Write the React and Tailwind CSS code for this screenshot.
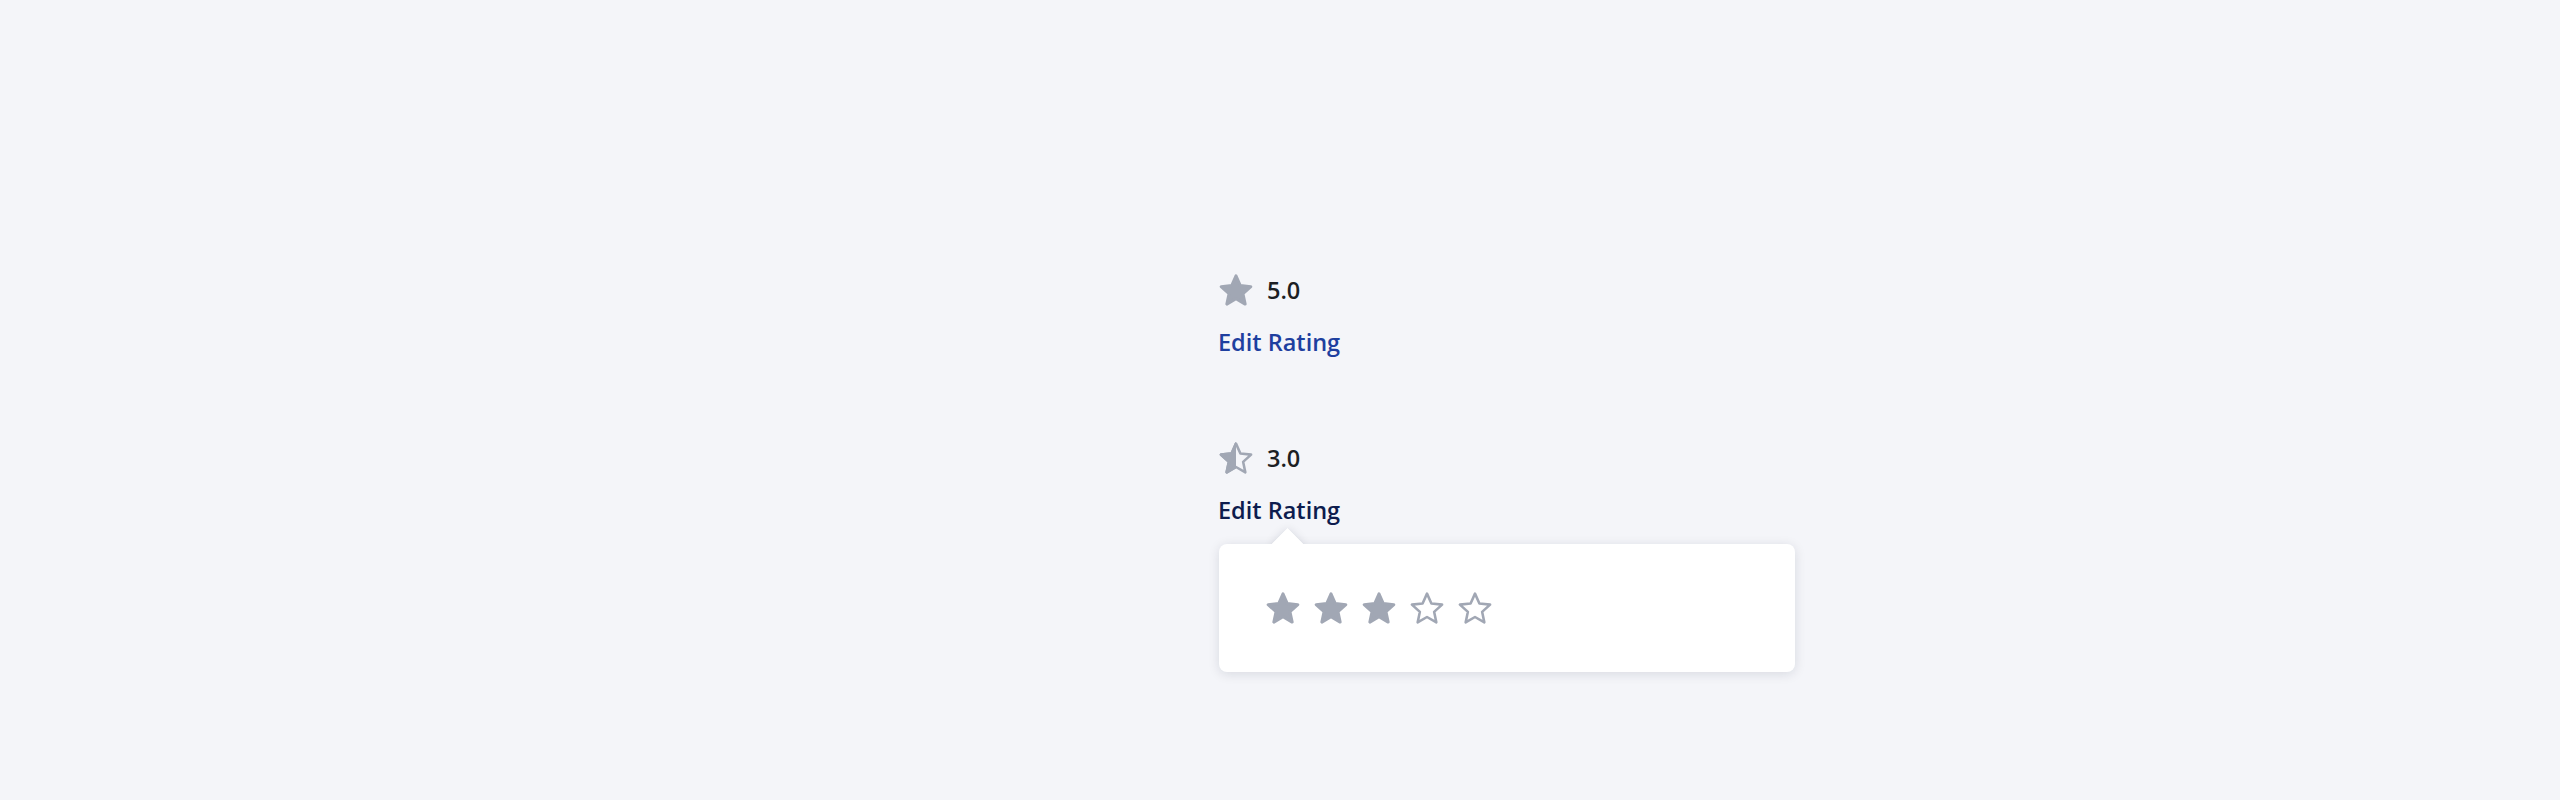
import React from "react";

// five-pointed star points, centred in a 24x24 box
function starPoints(R, ratio = 0.47) {
  const cx = 12;
  const cy = 12 + 0.0955 * R;
  const pts = [];
  for (let i = 0; i < 10; i++) {
    const r = i % 2 === 0 ? R : R * ratio;
    const a = (Math.PI / 5) * i - Math.PI / 2;
    pts.push(`${(cx + r * Math.cos(a)).toFixed(2)},${(cy + r * Math.sin(a)).toFixed(2)}`);
  }
  return pts.join(" ");
}

const FULL = starPoints(10.4);
const LINE = starPoints(10.6);

function Star({ kind = "full", className = "w-9 h-9" }) {
  const id = React.useId();
  return (
    <svg viewBox="0 0 24 24" className={className}>
      {kind === "full" && (
        <polygon points={FULL} fill="#a1a7b4" stroke="#a1a7b4" strokeWidth="2" strokeLinejoin="round" />
      )}
      {kind === "empty" && (
        <polygon points={LINE} fill="none" stroke="#a1a7b4" strokeWidth="1.7" strokeLinejoin="round" />
      )}
      {kind === "half" && (
        <>
          <clipPath id={id}>
            <rect x="0" y="0" width="12" height="24" />
          </clipPath>
          <polygon points={LINE} fill="none" stroke="#a1a7b4" strokeWidth="1.7" strokeLinejoin="round" />
          <polygon points={FULL} fill="#a1a7b4" stroke="#a1a7b4" strokeWidth="2" strokeLinejoin="round" clipPath={`url(#${id})`} />
        </>
      )}
    </svg>
  );
}

function RatingBlock({ value, kind, linkClass, children }) {
  return (
    <div className="relative">
      <div className="flex items-center gap-[13px] h-9">
        <Star kind={kind} />
        <span className="text-[23.5px] leading-8 font-semibold text-[#1c1f24]">{value}</span>
      </div>
      <div className={`mt-[18px] text-[23.5px] leading-8 font-semibold ${linkClass}`}>Edit Rating</div>
      {children}
    </div>
  );
}

export default function App() {
  const picked = ["full", "full", "full", "empty", "empty"];
  return (
    <div className="w-full h-[800px] bg-[#f4f5f9] flex justify-center pt-[272px]" style={{ fontFamily: '"Open Sans", "Noto Sans", sans-serif' }}>
      <div className="w-[124px] flex flex-col">
        <RatingBlock value="5.0" kind="full" linkClass="text-[#1e3f9f]" />
        <div className="mt-[82px]">
          <RatingBlock value="3.0" kind="half" linkClass="text-[#0d1c4e]">
            <div className="absolute left-px top-[104px] w-[576px] h-32">
              <div className="absolute left-[57px] -top-[11px] w-[23px] h-[23px] rotate-45 bg-white shadow-[0_0_10px_rgba(20,25,50,0.12)]" />
              <div className="relative h-full rounded-lg bg-white shadow-[0_2px_12px_rgba(20,25,50,0.12)] flex items-center pl-[46px] gap-3">
                {picked.map((k, i) => (
                  <Star key={i} kind={k} />
                ))}
              </div>
              <div className="absolute left-[57px] -top-[11px] w-[23px] h-[23px] rotate-45 bg-white" />
              <div className="absolute left-[50px] top-0 w-[40px] h-[14px] bg-white" />
            </div>
          </RatingBlock>
        </div>
      </div>
    </div>
  );
}
